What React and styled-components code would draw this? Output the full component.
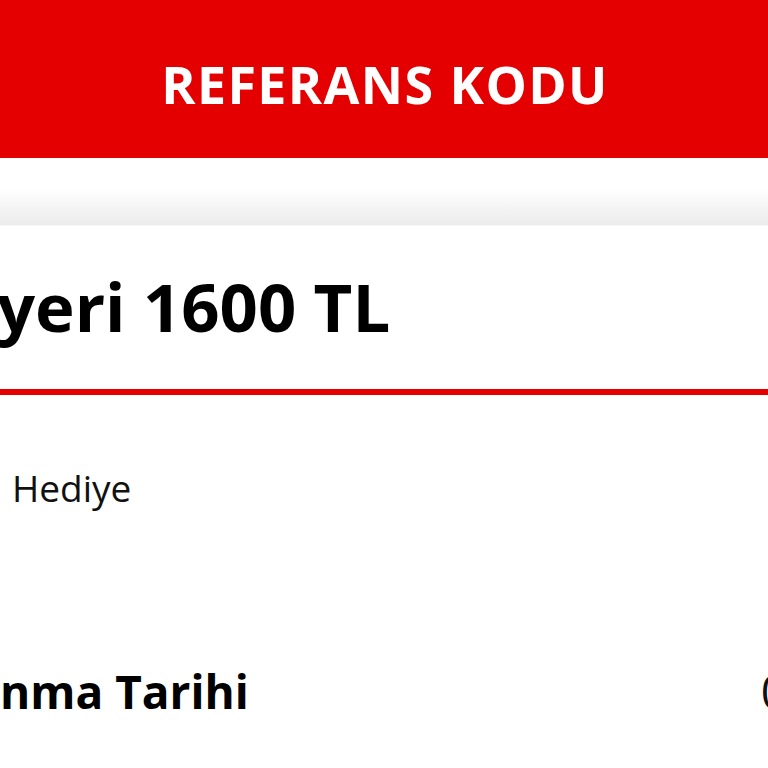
import React from "react";
import styled, { createGlobalStyle } from "styled-components";

const GlobalStyle = createGlobalStyle`
  html, body {
    margin: 0;
    padding: 0;
    background: #ffffff;
    overflow: hidden;
  }
  body {
    font-family: "Open Sans", "Noto Sans", "Liberation Sans", sans-serif;
    color: #000000;
  }
`;

const Page = styled.div`
  width: 768px;
  height: 768px;
  overflow: hidden;
  display: flex;
  flex-direction: column;
  background: #ffffff;
`;

const Header = styled.header`
  height: 158px;
  flex: none;
  background: #e40000;
  display: flex;
  align-items: center;
  justify-content: center;
`;

const HeaderTitle = styled.h1`
  margin: 0;
  color: #ffffff;
  font-size: 52px;
  font-weight: 700;
  line-height: 1;
  letter-spacing: 1.4px;
  padding: 10px 0 0 2px;
`;

const Shade = styled.div`
  height: 68px;
  flex: none;
  background: linear-gradient(
    to bottom,
    #ffffff 0px,
    #ffffff 32px,
    #f4f4f4 50px,
    #ececec 67px,
    #ffffff 68px
  );
`;

const Card = styled.section`
  display: flex;
  flex-direction: column;
  overflow: hidden;
`;

const TitleRow = styled.div`
  padding: 35px 0 37px;
  border-bottom: 6px solid #e40000;
  overflow: hidden;
`;

const Title = styled.h2`
  margin: 0;
  font-size: 67px;
  font-weight: 700;
  line-height: 91px;
  white-space: nowrap;
  text-indent: -3px;
`;

const Gift = styled.p`
  margin: 67px 0 0;
  padding-left: 12px;
  font-size: 37px;
  font-weight: 400;
  line-height: 52px;
  color: #111111;
  white-space: nowrap;
`;

const InfoRow = styled.div`
  margin-top: 146px;
  display: flex;
  justify-content: space-between;
  align-items: baseline;
  white-space: nowrap;
  overflow: hidden;
`;

const InfoLabel = styled.span`
  font-size: 46px;
  font-weight: 700;
  line-height: 62px;
`;

const InfoValue = styled.span`
  font-size: 46px;
  font-weight: 400;
  line-height: 62px;
  color: #111111;
  margin-right: -19px;
`;

export default function App() {
  return (
    <>
      <GlobalStyle />
      <Page>
        <Header>
          <HeaderTitle>REFERANS KODU</HeaderTitle>
        </Header>
        <Shade />
        <Card>
          <TitleRow>
            <Title>yeri 1600 TL</Title>
          </TitleRow>
          <Gift>Hediye</Gift>
          <InfoRow>
            <InfoLabel>nma Tarihi</InfoLabel>
            <InfoValue>0</InfoValue>
          </InfoRow>
        </Card>
      </Page>
    </>
  );
}
